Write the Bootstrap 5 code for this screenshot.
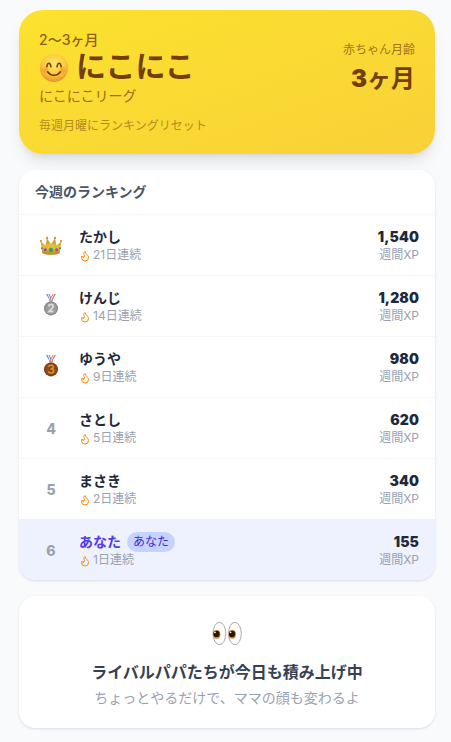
<!DOCTYPE html>
<html lang="ja">
<head>
<meta charset="utf-8">
<meta name="viewport" content="width=device-width, initial-scale=1">
<title>今週のランキング</title>
<link href="https://cdn.jsdelivr.net/npm/bootstrap@5.3.0/dist/css/bootstrap.min.css" rel="stylesheet">
<style>
  body { background: #f9fafb; font-family: Inter, "Noto Sans CJK JP", sans-serif; color: #1e293b; overflow: hidden; }
  .page { padding: 10px 16px 14px 19px; gap: 16px; }
  .t12 { font-size: 12px; line-height: 16px; }
  .t14 { font-size: 14px; line-height: 20px; }
  .t16 { font-size: 16px; line-height: 24px; }
  .league { height: 144px; padding: 20px; border-radius: 24px; color: #733e0a;
    background: linear-gradient(160deg, #fce22e 0%, #f9d535 75%, #f8d139 100%);
    box-shadow: 0 10px 15px -3px rgba(0,0,0,.1), 0 4px 6px -4px rgba(0,0,0,.1); }
  .league-title { font-size: 30px; line-height: 36px; gap: 7px; font-weight: 700; }
  .league-title span { margin-top: -2px; margin-bottom: 2px; }
  .age { font-size: 24px; line-height: 32px; font-weight: 900; padding-top: 5px; }
  .o8 { opacity: .8; } .o7 { opacity: .7; } .o5 { opacity: .5; } .o65 { opacity: .65; }
  .panel { background: #fff; border-radius: 16px; box-shadow: 0 1px 3px rgba(0,0,0,.1), 0 1px 2px -1px rgba(0,0,0,.1); }
  .panel-head { height: 44px; color: #4a5565; }
  .entry { height: 61px; border-top: 1px solid #f6f7f9; gap: 12px; }
  .entry.me { background: #eef2ff; border-top-color: #f0f3ff; }
  .rank { width: 32px; color: #99a1af; }
  .rank-no { font-weight: 800; padding-top: 2px; }
  .rank svg { display: block; }
  .soft { color: #99a1af; }
  .streak { margin-left: 2px; }
  .me .who { color: #4f39f6; }
  .you { background: #c6d2ff; color: #432dd7; padding: 2px 6px; margin-left: 6px; }
  .flame { width: 12px; height: 12px; fill: none; stroke: #ff8904; stroke-width: 2; stroke-linecap: round; stroke-linejoin: round; margin-top: 2px; }
  .xp { font-weight: 900; letter-spacing: .1px; }
  .rival { height: 132px; padding-top: 20px; }
  .rival-title { color: #364153; }
</style>
</head>
<body>
<svg width="0" height="0" class="position-absolute" aria-hidden="true">
  <defs>
    <symbol id="flame" viewBox="0 0 24 24"><path d="M8.5 14.5A2.5 2.5 0 0 0 11 12c0-1.38-.5-2-1-3-1.072-2.143-.224-4.054 2-6 .5 2.5 2 4.9 4 6.5 2 1.6 3 3.5 3 5.5a7 7 0 1 1-14 0c0-1.153.433-2.294 1-3a2.5 2.5 0 0 0 2.5 2.5z"/></symbol>
    <radialGradient id="face" cx=".5" cy=".35" r=".65"><stop offset="0" stop-color="#ffe86a"/><stop offset=".6" stop-color="#fdc93c"/><stop offset="1" stop-color="#e8912a"/></radialGradient>
    <radialGradient id="blush"><stop offset="0" stop-color="#f5762c" stop-opacity=".6"/><stop offset="1" stop-color="#f5762c" stop-opacity="0"/></radialGradient>
    <linearGradient id="gold" x2="0" y2="1"><stop offset="0" stop-color="#b8922a"/><stop offset=".5" stop-color="#e2bb38"/><stop offset="1" stop-color="#b98a1c"/></linearGradient>
    <radialGradient id="silver"><stop offset="0" stop-color="#a2a2a2"/><stop offset=".75" stop-color="#999"/><stop offset="1" stop-color="#7b7b7b"/></radialGradient>
    <radialGradient id="bronze"><stop offset="0" stop-color="#854210"/><stop offset=".7" stop-color="#944d14"/><stop offset="1" stop-color="#6d340d"/></radialGradient>
    <g id="ribbon"><path d="M3.2 0h3.2l3.2 7H7z" fill="#4b6cc4"/><path d="M4.4 0h1.2l3 7H7.2z" fill="#f3f0f4"/><path d="M12.8 0H9.6L6 7h3z" fill="#e8645a"/><path d="M11.4 0h-.9L7 7h1z" fill="#fff"/><path d="M6.3 5.8h3.4v2H6.3z" fill="#a9a4a9"/></g>
  </defs>
</svg>
<main class="page d-flex flex-column">
  <section class="league d-flex justify-content-between align-items-start">
    <div>
      <div class="t14 fw-medium o8">2〜3ヶ月</div>
      <div class="league-title d-flex align-items-center">
        <svg width="30" height="30" viewBox="0 0 30 30" aria-hidden="true">
          <circle cx="15" cy="15" r="14" fill="url(#face)"/>
          <circle cx="6.7" cy="17" r="4.2" fill="url(#blush)"/><circle cx="23.3" cy="17" r="4.2" fill="url(#blush)"/>
          <path d="M7.8 13.8c.7-4.8 3.5-4.8 4.2 0M18 13.8c.7-4.8 3.5-4.8 4.2 0M8.5 18.8c3.6 4.7 9.4 4.7 13 0" fill="none" stroke="#70410f" stroke-width="1.6" stroke-linecap="round" stroke-linejoin="round"/>
        </svg>
        <span>にこにこ</span>
      </div>
      <div class="t14 o7">にこにこリーグ</div>
      <div class="t12 o5 mt-2 pt-1">毎週月曜にランキングリセット</div>
    </div>
    <div class="text-end mt-2 pt-1">
      <div class="t12 o65">赤ちゃん月齢</div>
      <div class="age">3<span class="fw-bold">ヶ月</span></div>
    </div>
  </section>

  <section class="panel overflow-hidden">
    <div class="panel-head t14 fw-bold px-3 d-flex align-items-center">今週のランキング</div>
    <div class="entry d-flex align-items-center px-3">
      <div class="rank d-flex justify-content-center"><svg width="24" height="24" viewBox="0 0 24 24" aria-hidden="true">
        <path d="M3.2 20.2 1.7 8.5l4.8 4L8 5.2l4 6.3 4-6.3 1.5 7.3 4.8-4-1.5 11.7c-4.8 2-12.8 2-17.6 0z" fill="url(#gold)"/>
        <path d="m4.6 13.4 3 4.2L12 9.5l4.4 8.1 3-4.2" fill="none" stroke="#f0d566" stroke-width=".7"/>
        <g fill="#c49a2c"><circle cx="1.9" cy="8.1" r="1.1"/><circle cx="8" cy="4.9" r="1.2"/><circle cx="16" cy="4.9" r="1.2"/><circle cx="22.1" cy="8.1" r="1.1"/></g>
        <circle cx="12" cy="17" r="2" fill="#18a184"/><circle cx="6.4" cy="16.8" r="1.5" fill="#b43ca3"/><circle cx="17.6" cy="16.8" r="1.5" fill="#b43ca3"/><circle cx="2.9" cy="15.3" r="1" fill="#279c72"/><circle cx="21.1" cy="15.3" r="1" fill="#279c72"/>
      </svg></div>
      <div class="flex-grow-1"><div class="who t14 fw-bold">たかし</div><div class="t12 soft d-flex align-items-center"><svg class="flame"><use href="#flame"/></svg><span class="streak">21日連続</span></div></div>
      <div class="text-end"><div class="xp t14">1,540</div><div class="t12 soft">週間XP</div></div>
    </div>
    <div class="entry d-flex align-items-center px-3">
      <div class="rank d-flex justify-content-center"><svg width="16" height="24" viewBox="0 0 16 24" aria-hidden="true"><use href="#ribbon"/><circle cx="8" cy="14.4" r="7" fill="url(#silver)"/><path d="M5.7 12.5c.3-3 4.8-2.7 4.5.1-.2 1.7-2.4 2.8-4.3 4.9h4.6" fill="none" stroke="#dadada" stroke-width="1.8"/></svg></div>
      <div class="flex-grow-1"><div class="who t14 fw-bold">けんじ</div><div class="t12 soft d-flex align-items-center"><svg class="flame"><use href="#flame"/></svg><span class="streak">14日連続</span></div></div>
      <div class="text-end"><div class="xp t14">1,280</div><div class="t12 soft">週間XP</div></div>
    </div>
    <div class="entry d-flex align-items-center px-3">
      <div class="rank d-flex justify-content-center"><svg width="16" height="24" viewBox="0 0 16 24" aria-hidden="true"><use href="#ribbon"/><circle cx="8" cy="14.4" r="7" fill="url(#bronze)"/><path d="M5.5 11.9c.8-2.3 4.7-2.1 4.7.3 0 1.3-1.1 1.8-2.7 1.8 1.8 0 3.1.6 3.1 2 0 2.6-4.6 2.7-5.4.3" fill="none" stroke="#dc8f35" stroke-width="1.6"/></svg></div>
      <div class="flex-grow-1"><div class="who t14 fw-bold">ゆうや</div><div class="t12 soft d-flex align-items-center"><svg class="flame"><use href="#flame"/></svg><span class="streak">9日連続</span></div></div>
      <div class="text-end"><div class="xp t14">980</div><div class="t12 soft">週間XP</div></div>
    </div>
    <div class="entry d-flex align-items-center px-3">
      <div class="rank rank-no t14 text-center">4</div>
      <div class="flex-grow-1"><div class="who t14 fw-bold">さとし</div><div class="t12 soft d-flex align-items-center"><svg class="flame"><use href="#flame"/></svg><span class="streak">5日連続</span></div></div>
      <div class="text-end"><div class="xp t14">620</div><div class="t12 soft">週間XP</div></div>
    </div>
    <div class="entry d-flex align-items-center px-3">
      <div class="rank rank-no t14 text-center">5</div>
      <div class="flex-grow-1"><div class="who t14 fw-bold">まさき</div><div class="t12 soft d-flex align-items-center"><svg class="flame"><use href="#flame"/></svg><span class="streak">2日連続</span></div></div>
      <div class="text-end"><div class="xp t14">340</div><div class="t12 soft">週間XP</div></div>
    </div>
    <div class="entry me d-flex align-items-center px-3">
      <div class="rank rank-no t14 text-center">6</div>
      <div class="flex-grow-1"><div class="t14 d-flex align-items-center"><span class="who fw-bold">あなた</span><span class="you t12 rounded-pill">あなた</span></div><div class="t12 soft d-flex align-items-center"><svg class="flame"><use href="#flame"/></svg><span class="streak">1日連続</span></div></div>
      <div class="text-end"><div class="xp t14">155</div><div class="t12 soft">週間XP</div></div>
    </div>
  </section>

  <section class="rival panel text-center d-flex flex-column align-items-center">
    <svg width="32" height="36" viewBox="0 0 32 36" aria-hidden="true">
      <g fill="#fff" stroke="#aaa" stroke-width="1"><ellipse cx="8.4" cy="17.5" rx="6.4" ry="11.2"/><ellipse cx="23.9" cy="17.5" rx="6.4" ry="11.2"/></g>
      <g fill="#c78d15"><ellipse cx="5.7" cy="18.4" rx="3.7" ry="4.3"/><ellipse cx="21.2" cy="18.4" rx="3.7" ry="4.3"/></g>
      <g fill="#2a1205"><circle cx="5.5" cy="17.9" r="3.1"/><circle cx="21" cy="17.9" r="3.1"/></g>
      <g fill="#fff"><circle cx="4" cy="16.3" r=".9"/><circle cx="19.5" cy="16.3" r=".9"/></g>
    </svg>
    <div class="rival-title t16 fw-bold mt-2">ライバルパパたちが今日も積み上げ中</div>
    <div class="t14 soft mt-1">ちょっとやるだけで、ママの顔も変わるよ</div>
  </section>
</main>
<script src="https://cdn.jsdelivr.net/npm/bootstrap@5.3.0/dist/js/bootstrap.bundle.min.js"></script>
</body>
</html>
